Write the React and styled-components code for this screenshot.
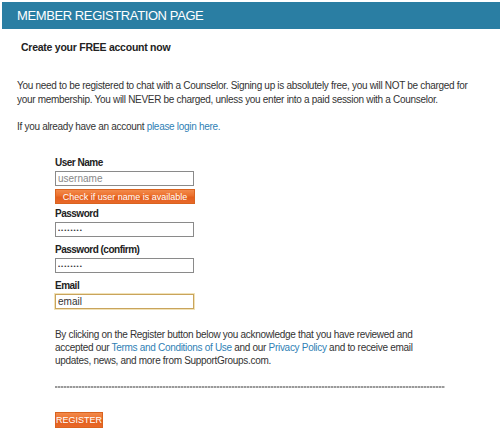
import styled, { createGlobalStyle } from "styled-components";

const Global = createGlobalStyle`
  body {
    margin: 0;
    background: #fff;
    font-family: "Liberation Sans", Arial, sans-serif;
    color: #222;
  }
`;

const Page = styled.div`
  width: 500px;
  padding-top: 2px;
`;

const TitleBar = styled.div`
  margin-left: 2px;
  height: 27px;
  background: #2a7ea3;
  color: #fff;
  font-size: 13px;
  letter-spacing: -0.4px;
  display: flex;
  align-items: center;
  padding-left: 15px;
`;

const Heading = styled.h2`
  margin: 12px 0 0 21px;
  font-size: 10.5px;
  letter-spacing: -0.25px;
  font-weight: bold;
  color: #222;
`;

const Text = styled.p`
  margin: ${p => p.m || "0"};
  padding-left: ${p => p.indent || 17}px;
  font-size: 10px;
  letter-spacing: -0.3px;
  line-height: ${p => p.lh || 14}px;
  color: #333;
  width: ${p => p.w || 468}px;
`;

const Link = styled.a`
  color: #2f7fb5;
  text-decoration: none;
`;

const Form = styled.form`
  margin: 22px 0 0 55px;
  display: flex;
  flex-direction: column;
  width: 140px;
`;

const Label = styled.label`
  font-size: 10px;
  letter-spacing: -0.5px;
  font-weight: bold;
  color: #222;
  line-height: 13px;
  margin-top: ${p => p.top || 0}px;
`;

const Input = styled.input`
  box-sizing: border-box;
  width: 139px;
  height: 15px;
  margin-top: 2px;
  padding: 0 2px;
  border: 1px solid ${p => (p.focus ? "#c9a45c" : "#8a8a8a")};
  box-shadow: ${p => (p.focus ? "0 0 0 1px #f1e2b8" : "none")};
  font-family: "Liberation Sans", Arial, sans-serif;
  font-size: ${p => (p.type === "password" ? "6px" : "10px")};
  color: #333;
  outline: none;
  letter-spacing: ${p => (p.type === "password" ? "1px" : "0")};
  &::placeholder {
    color: #888;
  }
`;

const OrangeButton = styled.button`
  box-sizing: border-box;
  height: ${p => p.h || 15}px;
  width: ${p => p.w}px;
  margin-top: ${p => p.top || 0}px;
  border: 1px solid #d9631f;
  background: linear-gradient(#f28a4b 0%, #ec6f2b 45%, #e35f1c 55%, #e8682a 100%);
  color: #fff;
  font-family: "Liberation Sans", Arial, sans-serif;
  font-size: ${p => p.fs || 9}px;
  white-space: nowrap;
  padding: 0;
  cursor: pointer;
`;

const Divider = styled.div`
  margin: 19px 0 0 55px;
  width: 390px;
  height: 2px;
  background: repeating-linear-gradient(90deg, #9a9a9a 0 2px, #d0d0d0 2px 3px);
`;

const Footer = styled.div`
  padding: 21px 0 0 55px;
`;

export default function App() {
  return (
    <Page>
      <Global />
      <TitleBar>MEMBER REGISTRATION PAGE</TitleBar>
      <Heading>Create your FREE account now</Heading>
      <Text m="26px 0 0">
        You need to be registered to chat with a Counselor. Signing up is absolutely free, you
        will NOT be charged for your membership. You will NEVER be charged, unless you enter
        into a paid session with a Counselor.
      </Text>
      <Text m="13px 0 0">
        If you already have an account <Link href="#">please login here.</Link>
      </Text>
      <Form onSubmit={e => e.preventDefault()}>
        <Label>User Name</Label>
        <Input type="text" placeholder="username" />
        <OrangeButton type="button" w={140} top={3}>Check if user name is available</OrangeButton>
        <Label top={3}>Password</Label>
        <Input type="password" defaultValue="password" />
        <Label top={6}>Password (confirm)</Label>
        <Input type="password" defaultValue="password" />
        <Label top={6}>Email</Label>
        <Input type="text" focus defaultValue="email" />
      </Form>
      <Text m="19px 0 0" indent={55} w={365} lh={13}>
        By clicking on the Register button below you acknowledge that you have reviewed and
        accepted our <Link href="#">Terms and Conditions of Use</Link> and our{" "}
        <Link href="#">Privacy Policy</Link> and to receive email updates, news, and more from
        SupportGroups.com.
      </Text>
      <Divider />
      <Footer>
        <OrangeButton type="button" w={48} h={16} fs={9}>REGISTER</OrangeButton>
      </Footer>
    </Page>
  );
}
